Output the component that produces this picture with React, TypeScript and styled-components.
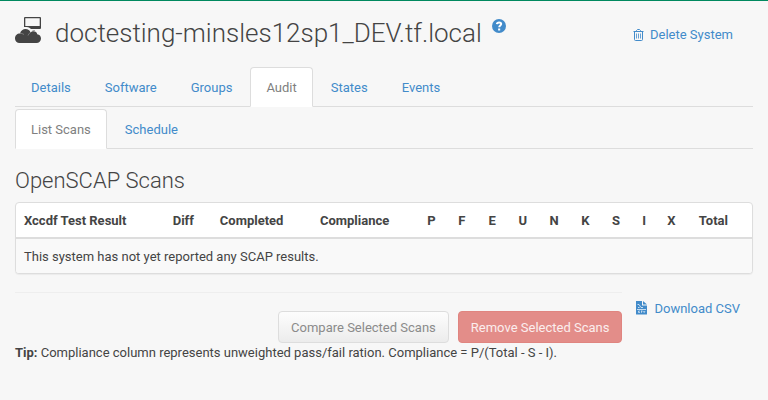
import React from "react";
import styled, { createGlobalStyle } from "styled-components";

const GlobalStyle = createGlobalStyle`
  * { box-sizing: border-box; }
  body {
    margin: 0;
    background: #f7f7f7;
    color: #444;
    font: 13px/19px Roboto, "Liberation Sans", sans-serif;
  }
`;

const Page = styled.main`
  border-top: 1px solid #00895f;
  padding: 13px 15px 40px;
`;

const Header = styled.header`
  display: flex;
  justify-content: space-between;
  align-items: flex-start;
  height: 53px;
`;

const Title = styled.h1`
  display: flex;
  align-items: flex-start;
  margin: 0;
  font-size: 26px;
  font-weight: 300;
  line-height: 38px;
  white-space: nowrap;
`;

const SystemIcon = styled.svg`
  width: 26px;
  height: 27px;
  margin: 2px 14px 0 0;
`;

const HelpLink = styled.a`
  display: flex;
  margin: 5px 0 0 10px;
`;

const Link = styled.a`
  display: inline-flex;
  align-items: center;
  color: #428bca;
  text-decoration: none;
  white-space: nowrap;
`;

const DeleteLink = styled(Link)`
  gap: 6px;
  margin: 11px 20px 0 0;
`;

const Tabs = styled.nav`
  display: flex;
  gap: 2px;
  margin-bottom: 2px;
  border-bottom: 1px solid #ddd;
`;

const Tab = styled.a<{ $active?: boolean }>`
  margin-bottom: -1px;
  padding: 10px 15px 9px;
  border: 1px solid ${(p) => (p.$active ? "#ddd" : "transparent")};
  border-bottom-color: ${(p) => (p.$active ? "#fff" : "transparent")};
  border-radius: 4px 4px 0 0;
  background: ${(p) => (p.$active ? "#fff" : "transparent")};
  color: ${(p) => (p.$active ? "#808080" : "#428bca")};
  text-decoration: none;
`;

const SectionTitle = styled.h2`
  margin: 18px 0 8px;
  font-size: 22px;
  font-weight: 300;
  line-height: 27px;
`;

const Panel = styled.section`
  overflow: hidden;
  border: 1px solid #ddd;
  border-radius: 4px;
  background: #fff;
  box-shadow: 0 1px 1px rgba(0, 0, 0, 0.05);
`;

const Table = styled.table`
  width: 100%;
  min-width: 700px;
  table-layout: fixed;
  border-collapse: collapse;
`;

const HeadCell = styled.th<{ $share: number }>`
  width: ${(p) => p.$share}%;
  padding: 8px 0 7px 8px;
  border-bottom: 2px solid #ddd;
  text-align: left;
  font-weight: 700;
  white-space: nowrap;
`;

const Cell = styled.td`
  padding: 8px 8px 7px;
  background: #f9f9f9;
`;

const Footer = styled.div`
  display: flex;
  align-items: flex-start;
  margin-top: 18px;
`;

const Actions = styled.div`
  display: flex;
  flex: 1;
  justify-content: flex-end;
  gap: 9px;
  padding-top: 18px;
  border-top: 1px solid #eee;
`;

const Button = styled.button<{ $danger?: boolean }>`
  height: 32px;
  padding: 0 12px;
  border: 1px solid ${(p) => (p.$danger ? "#e08580" : "#ddd")};
  border-radius: 4px;
  background: ${(p) => (p.$danger ? "#e38d89" : "linear-gradient(#fdfdfd, #ececec)")};
  color: ${(p) => (p.$danger ? "#fbeeee" : "#8b8b8b")};
  font: inherit;
  white-space: nowrap;
`;

const DownloadLink = styled(Link)`
  gap: 7px;
  padding: 7px 13px 6px;

  svg {
    margin-bottom: 2px;
  }
`;

const Tip = styled.p`
  margin: 0;
`;

const tabs = ["Details", "Software", "Groups", "Audit", "States", "Events"];
const subTabs = ["List Scans", "Schedule"];
const columns: [string, number][] = [
  ["Xccdf Test Result", 20.2], ["Diff", 6.4], ["Completed", 13.6], ["Compliance", 14.6],
  ["P", 4.2], ["F", 4.1], ["E", 4.1], ["U", 4.2], ["N", 4.3], ["K", 4.2],
  ["S", 4.1], ["I", 3.4], ["X", 4.3], ["Total", 8.3],
];

const TabList = ({ label, items, current }: { label: string; items: string[]; current: string }) => (
  <Tabs aria-label={label}>
    {items.map((item) => (
      <Tab key={item} href="#" $active={item === current} aria-current={item === current ? "page" : undefined}>
        {item}
      </Tab>
    ))}
  </Tabs>
);

const CloudComputer = () => (
  <SystemIcon viewBox="0 0 26 27" fill="#444" aria-hidden="true">
    <path fillRule="evenodd" d="M10 1h15q1 0 1 1v10q0 1-1 1h-9q-2-2-4-2H9V2q0-1 1-1Zm.3 1.200V10h14.400V2.200Z" />
    <path d="M17 14h3v1h-2Z" fill="#aaa" />
    <path d="M4.500 27a4.500 4.500 0 0 1-4.500-4.500c0-3 2-5 5-5 .8-3 3-4.500 5.500-4.500 2.500 0 4.500 1.500 5 3.500 2.500-2.500 6.500-1 6.700 1.800 2.300.2 3.800 2 3.800 4.200a4.500 4.500 0 0 1-4.500 4.500Z" />
    <path d="M5 17.500q2-.5 4 1m6.500-2q-2 1-2.500 3" fill="none" stroke="#999" strokeWidth=".6" />
  </SystemIcon>
);

const Help = () => (
  <svg width="14" height="14" viewBox="0 0 14 14" aria-hidden="true">
    <circle cx="7" cy="7" r="7" fill="#428bca" />
    <path d="M4.900 5.200C5.100 2.800 9.200 2.900 9.200 5.100 9.200 6.500 7.200 6.600 7.200 8.300" fill="none" stroke="#fff" strokeWidth="2" />
    <path d="M6.100 9.500h2.100v2H6.100Z" fill="#fff" />
  </svg>
);

const Trash = () => (
  <svg width="11" height="12" viewBox="0 0 11 12" fill="none" stroke="#428bca" aria-hidden="true">
    <path d="M.5 2.500h10M3.500 2.500v-1l1-1h2l1 1v1M1.500 2.500v8q0 1 1 1h6q1 0 1-1v-8" />
    <path d="M3.500 4.500v5M5.500 4.500v5M7.500 4.500v5" strokeOpacity=".8" />
  </svg>
);

const CsvFile = () => (
  <svg width="12" height="14" viewBox="0 0 12 14" aria-hidden="true">
    <path d="M1 0h6v4.500h5V13q0 .5-.5.500H1.500Q1 13.500 1 13ZM8 0l4 3.500H8Z" fill="#428bca" />
    <path d="M2.500 3.500H4l2 3h2M3 6.500h1.500M2 8.500h9" fill="none" stroke="#fff" strokeWidth=".7" />
    <path d="M5 10H3.500v1.500H5M7.500 10H6l1 .8-.5.700H6M8.500 10l.7 1.500.8-1.500" fill="none" stroke="#fff" strokeWidth=".6" />
  </svg>
);

export default function App() {
  return (
    <>
      <GlobalStyle />
      <Page>
        <Header>
          <Title>
            <CloudComputer />
            doctesting-minsles12sp1_DEV.tf.local
            <HelpLink href="#" aria-label="Help"><Help /></HelpLink>
          </Title>
          <DeleteLink href="#"><Trash />Delete System</DeleteLink>
        </Header>
        <TabList label="System" items={tabs} current="Audit" />
        <TabList label="Audit" items={subTabs} current="List Scans" />
        <SectionTitle>OpenSCAP Scans</SectionTitle>
        <Panel>
          <Table>
            <thead>
              <tr>
                {columns.map(([name, share]) => (
                  <HeadCell key={name} scope="col" $share={share}>{name}</HeadCell>
                ))}
              </tr>
            </thead>
            <tbody>
              <tr><Cell colSpan={columns.length}>This system has not yet reported any SCAP results.</Cell></tr>
            </tbody>
          </Table>
        </Panel>
        <Footer>
          <Actions>
            <Button type="button" disabled>Compare Selected Scans</Button>
            <Button type="button" disabled $danger>Remove Selected Scans</Button>
          </Actions>
          <DownloadLink href="#"><CsvFile />Download CSV</DownloadLink>
        </Footer>
        <Tip><strong>Tip:</strong> Compliance column represents unweighted pass/fail ration. Compliance = P/(Total - S - I).</Tip>
      </Page>
    </>
  );
}
